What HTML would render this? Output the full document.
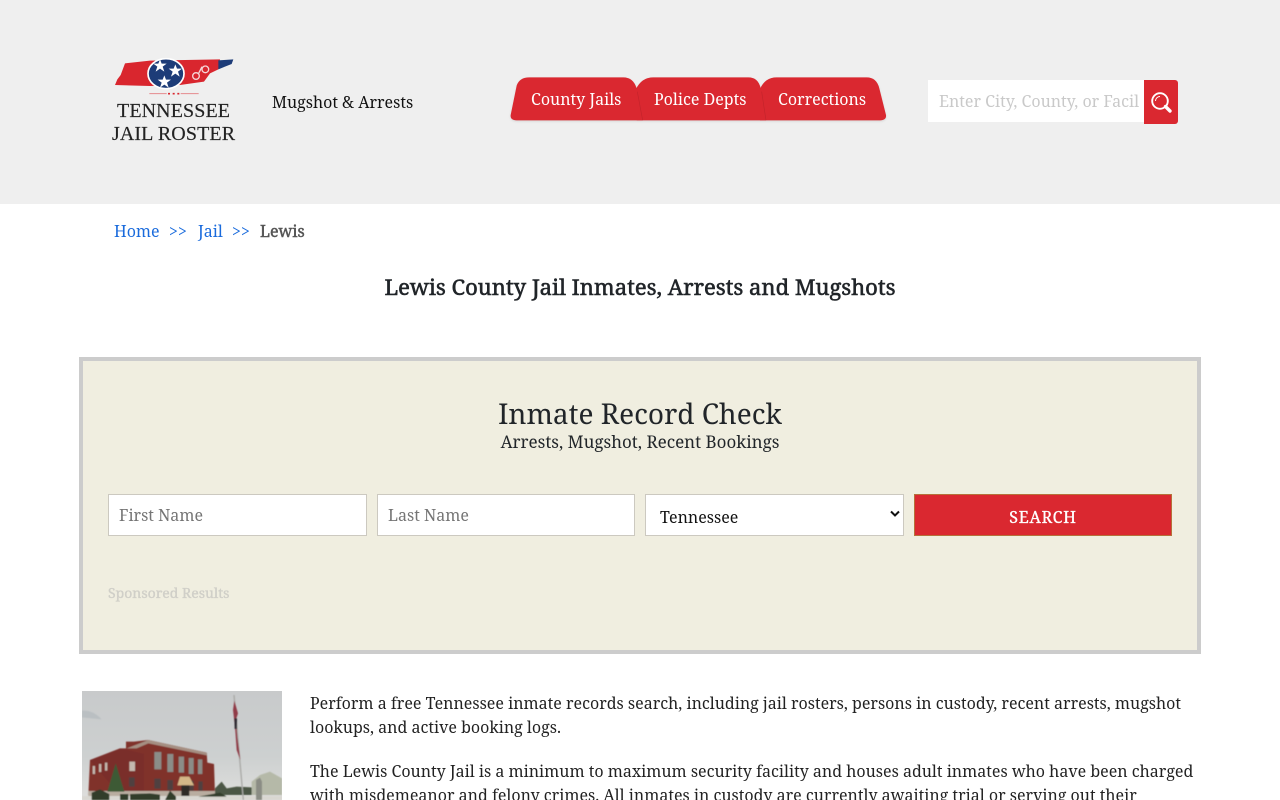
<!DOCTYPE html>
<html lang="en"><head><meta charset="utf-8"><title>Lewis County Jail Inmates, Arrests and Mugshots</title>
<style>
html,body{margin:0;padding:0;width:1280px;height:800px;overflow:hidden;background:#fff}
body{position:relative;font-family:"Noto Serif","DejaVu Serif","Liberation Serif",serif;color:#212529}
.t{position:absolute;white-space:nowrap;margin:0;font-weight:400}
.b{position:absolute;box-sizing:border-box}
.f{background:#fff;border:1px solid #ccc9c0;top:494px;height:42px}
</style></head><body>
<div class="b" style="left:0;top:0;width:1280px;height:204px;background:#efefef"></div>

<svg class="b" style="left:100px;top:50px" width="150" height="100" viewBox="0 0 450 300">
<path d="M45 105L52 88L62 75L75 40L150 32L360 28L355 58L330 70L312 95L240 105L150 108Z" fill="#d9262e"/>
<path d="M355 31L400 28L395 42L375 50L355 58Z" fill="#1d3c78"/>
<ellipse cx="198" cy="71" rx="54" ry="45" fill="#1d3c78" stroke="#fff" stroke-width="5"/>
<path d="M180 28l5 13 15 0-12 9 5 15-13-9-13 9 5-15-12-9 15 0z" fill="#fff"/>
<path d="M226 43l5 13 15 0-12 9 5 15-13-9-13 9 5-15-12-9 15 0z" fill="#fff"/>
<path d="M193 76l5 13 15 0-12 9 5 15-13-9-13 9 5-15-12-9 15 0z" fill="#fff"/>
<g fill="none" stroke="#f6d5d6" stroke-width="4"><circle cx="288" cy="78" r="10"/><circle cx="316" cy="58" r="10"/><path d="M296 70L306 50"/></g>
<path d="M148 131H200M242 131H296" stroke="#e58b8f" stroke-width="3"/>
<path d="M204 131h6M218 131h6M232 131h6" stroke="#d9262e" stroke-width="5"/>
</svg>
<div class="t" style="left:117px;top:100px;font-family:'Liberation Serif',serif;font-size:20px;line-height:22px;color:#222;-webkit-text-stroke:.15px #222;letter-spacing:.1px">TENNESSEE</div>
<div class="t" style="left:112px;top:123px;font-family:'Liberation Serif',serif;font-size:20px;line-height:22px;color:#222;-webkit-text-stroke:.15px #222;letter-spacing:.1px">JAIL ROSTER</div>
<div class="t" style="left:272px;top:92px;font-size:16px;line-height:20px;color:#111">Mugshot &amp; Arrests</div>

<svg class="b" style="left:500px;top:65px;filter:drop-shadow(0 1px 1px rgba(0,0,0,.1))" width="400" height="70" viewBox="0 0 1200 210">
<g fill="#da2830">
<path d="M780 72Q795 37 830 37H1100Q1130 37 1138 70L1158 150Q1160 166 1140 166H780Z"/>
<path d="M408 72Q425 37 460 37H745Q775 37 782 70L798 166H410Z"/>
<path d="M32 150L50 62Q58 37 88 37H370Q400 37 410 70L428 166H50Q30 166 32 150Z"/>
</g>
<path d="M412 80L428 166M785 80L798 166" stroke="#000" stroke-opacity=".1" stroke-width="2" fill="none"/></svg>
<div class="t" style="left:531px;top:89px;font-size:16px;line-height:20px;color:#fff">County Jails</div>
<div class="t" style="left:654px;top:89px;font-size:16px;line-height:20px;color:#fff">Police Depts</div>
<div class="t" style="left:778px;top:89px;font-size:16px;line-height:20px;color:#fff">Corrections</div>

<div class="b" style="left:928px;top:80px;width:216px;height:42px;background:#fff"></div>
<div class="b" style="left:928px;top:80px;width:211px;height:42px;overflow:hidden"><span class="t" style="left:11px;top:11px;font-size:16px;line-height:20px;color:#c9c9c9">Enter City, County, or Facility</span></div>
<div class="b" style="left:1144px;top:80px;width:34px;height:44px;background:#da2830;border-radius:0 3px 3px 0"></div>
<svg class="b" style="left:1150px;top:91px" width="24" height="24" viewBox="0 0 24 24" fill="none" stroke="#fff"><circle cx="10" cy="10" r="7.800" stroke-width="1.900"/><path d="M5.500 10A4.500 4.500 0 0 1 10 5.500" stroke-width="1"/><path d="M15.500 15.500L20 20" stroke-width="3.400" stroke-linecap="round"/></svg>

<div class="t" style="left:114px;top:221px;font-size:16px;line-height:20px;color:#1a6bdc">Home</div>
<div class="t" style="left:169px;top:221px;font-size:16px;line-height:20px;color:#1a6bdc">&gt;&gt;</div>
<div class="t" style="left:198px;top:221px;font-size:16px;line-height:20px;color:#1a6bdc">Jail</div>
<div class="t" style="left:232px;top:221px;font-size:16px;line-height:20px;color:#1a6bdc">&gt;&gt;</div>
<div class="t" style="left:260px;top:221px;font-size:16px;line-height:20px;color:#555;-webkit-text-stroke:.45px #555">Lewis</div>

<h1 class="t" style="left:0;width:1280px;text-align:center;top:272px;font-size:22px;line-height:30px;-webkit-text-stroke:.55px #212529">Lewis County Jail Inmates, Arrests and Mugshots</h1>

<div class="b" style="left:79px;top:357px;width:1122px;height:297px;background:#f0eee0;border:4px solid #ccc"></div>
<div class="t" style="left:0;width:1280px;text-align:center;top:396px;font-size:28px;line-height:36px">Inmate Record Check</div>
<div class="t" style="left:0;width:1280px;text-align:center;top:431px;font-size:17px;line-height:22px">Arrests, Mugshot, Recent Bookings</div>

<div class="b f" style="left:108px;width:259px"><span class="t" style="left:10px;top:10px;font-size:16px;line-height:20px;color:#757575">First Name</span></div>
<div class="b f" style="left:377px;width:258px"><span class="t" style="left:10px;top:10px;font-size:16px;line-height:20px;color:#757575">Last Name</span></div>
<div class="b f" style="left:645px;width:259px"><span class="t" style="left:14px;top:12px;font-size:16px;line-height:20px;color:#111">Tennessee</span>
<svg class="b" style="left:244px;top:15px" width="10" height="8" viewBox="0 0 10 8"><path d="M1 1.500L5 5.500L9 1.500" fill="none" stroke="#111" stroke-width="2"/></svg></div>
<div class="b" style="left:914px;top:494px;width:258px;height:42px;background:#da2830;border:1px solid #b5713a"></div>
<div class="t" style="left:914px;width:258px;text-align:center;top:507px;font-size:16px;line-height:20px;color:#fff;letter-spacing:.8px;-webkit-text-stroke:.3px #fff">SEARCH</div>
<div class="t" style="left:108px;top:584px;font-size:14px;line-height:20px;color:#d0cfc8;-webkit-text-stroke:.35px #d0cfc8">Sponsored Results</div>

<svg class="b" style="left:82px;top:691px" width="200" height="109" viewBox="36 33 600 327">
<defs><linearGradient id="s" x1="0" y1="0" x2="0" y2="1"><stop offset="0" stop-color="#c8cacb"/><stop offset=".6" stop-color="#cdd0d0"/><stop offset="1" stop-color="#dfdfdd"/></linearGradient>
<filter id="bl" x="-5%" y="-5%" width="110%" height="110%"><feGaussianBlur stdDeviation="1.600"/></filter></defs>
<rect x="36" y="33" width="600" height="327" fill="url(#s)"/>
<g filter="url(#bl)">
<path d="M36 92Q70 90 95 118L36 112Z" fill="#babfc2"/>
<path d="M545 345V305L570 285L600 275L636 295V345Z" fill="#b5b9a8"/>
<path d="M435 345V325L455 305L470 325L500 320L545 322V345Z" fill="#4c5644"/>
<path d="M60 240L150 205L168 205V185L192 185L235 180L410 218L412 248L432 252L435 345H55Z" fill="#80302b"/>
<path d="M60 240L150 205L222 222V345H150Z" fill="#74292a" opacity=".5"/>
<path d="M170 205L235 180L410 218L410 226L235 190L200 205Z" fill="#a58f82"/>
<path d="M253 216h21v52h-21zM292 222h18v54h-18zM326 230h16v48h-16zM356 234h15v48h-15zM384 238h13v44h-13z" fill="#8b8d88"/>
<path d="M178 245h17v28h-17zM105 248h7v24h-7zM87 252h7v24h-7zM68 258h7v24h-7z" fill="#c4b9af"/>
<path d="M177 292h17v28h-17zM253 296h19v30h-19zM292 300h17v30h-17zM356 302h15v30h-15zM385 304h13v28h-13z" fill="#50413f"/>
<path d="M55 333H435V360H55Z" fill="#b9ada0"/>
<path d="M330 290h28l14 26H322z" fill="#d4b788"/>
<path d="M334 316h24v32h-24z" fill="#2f2a28"/>
<path d="M137 250l26 85H112z" fill="#3e5a36"/>
<path d="M36 348H636V360H36Z" fill="#d9d7d1"/>
<path d="M65 360V338L90 328L118 342V360ZM150 360V342H175V360ZM180 360V342L240 340L270 344V360ZM285 360L300 332L318 350V360ZM385 350L450 338L470 350H385Z" fill="#303d2b"/>
<path d="M558 360V300L570 293L576 305V360Z" fill="#8b8d85"/>
<path d="M492 45L520 360" stroke="#a9a9a6" stroke-width="4"/>
<path d="M493 62L504 100L498 118L502 170L511 240L500 210L495 140L489 90Z" fill="#903a46"/>
<path d="M493 115h8v32h-7z" fill="#2d2a30"/>
</g></svg>

<div class="t" style="left:310px;top:691px;font-size:16px;line-height:24px;color:#222">Perform a free Tennessee inmate records search, including jail rosters, persons in custody, recent arrests, mugshot<br>lookups, and active booking logs.</div>
<div class="t" style="left:310px;top:759px;font-size:16px;line-height:24px;color:#222">The Lewis County Jail is a minimum to maximum security facility and houses adult inmates who have been charged<br>with misdemeanor and felony crimes. All inmates in custody are currently awaiting trial or serving out their</div>
</body></html>
